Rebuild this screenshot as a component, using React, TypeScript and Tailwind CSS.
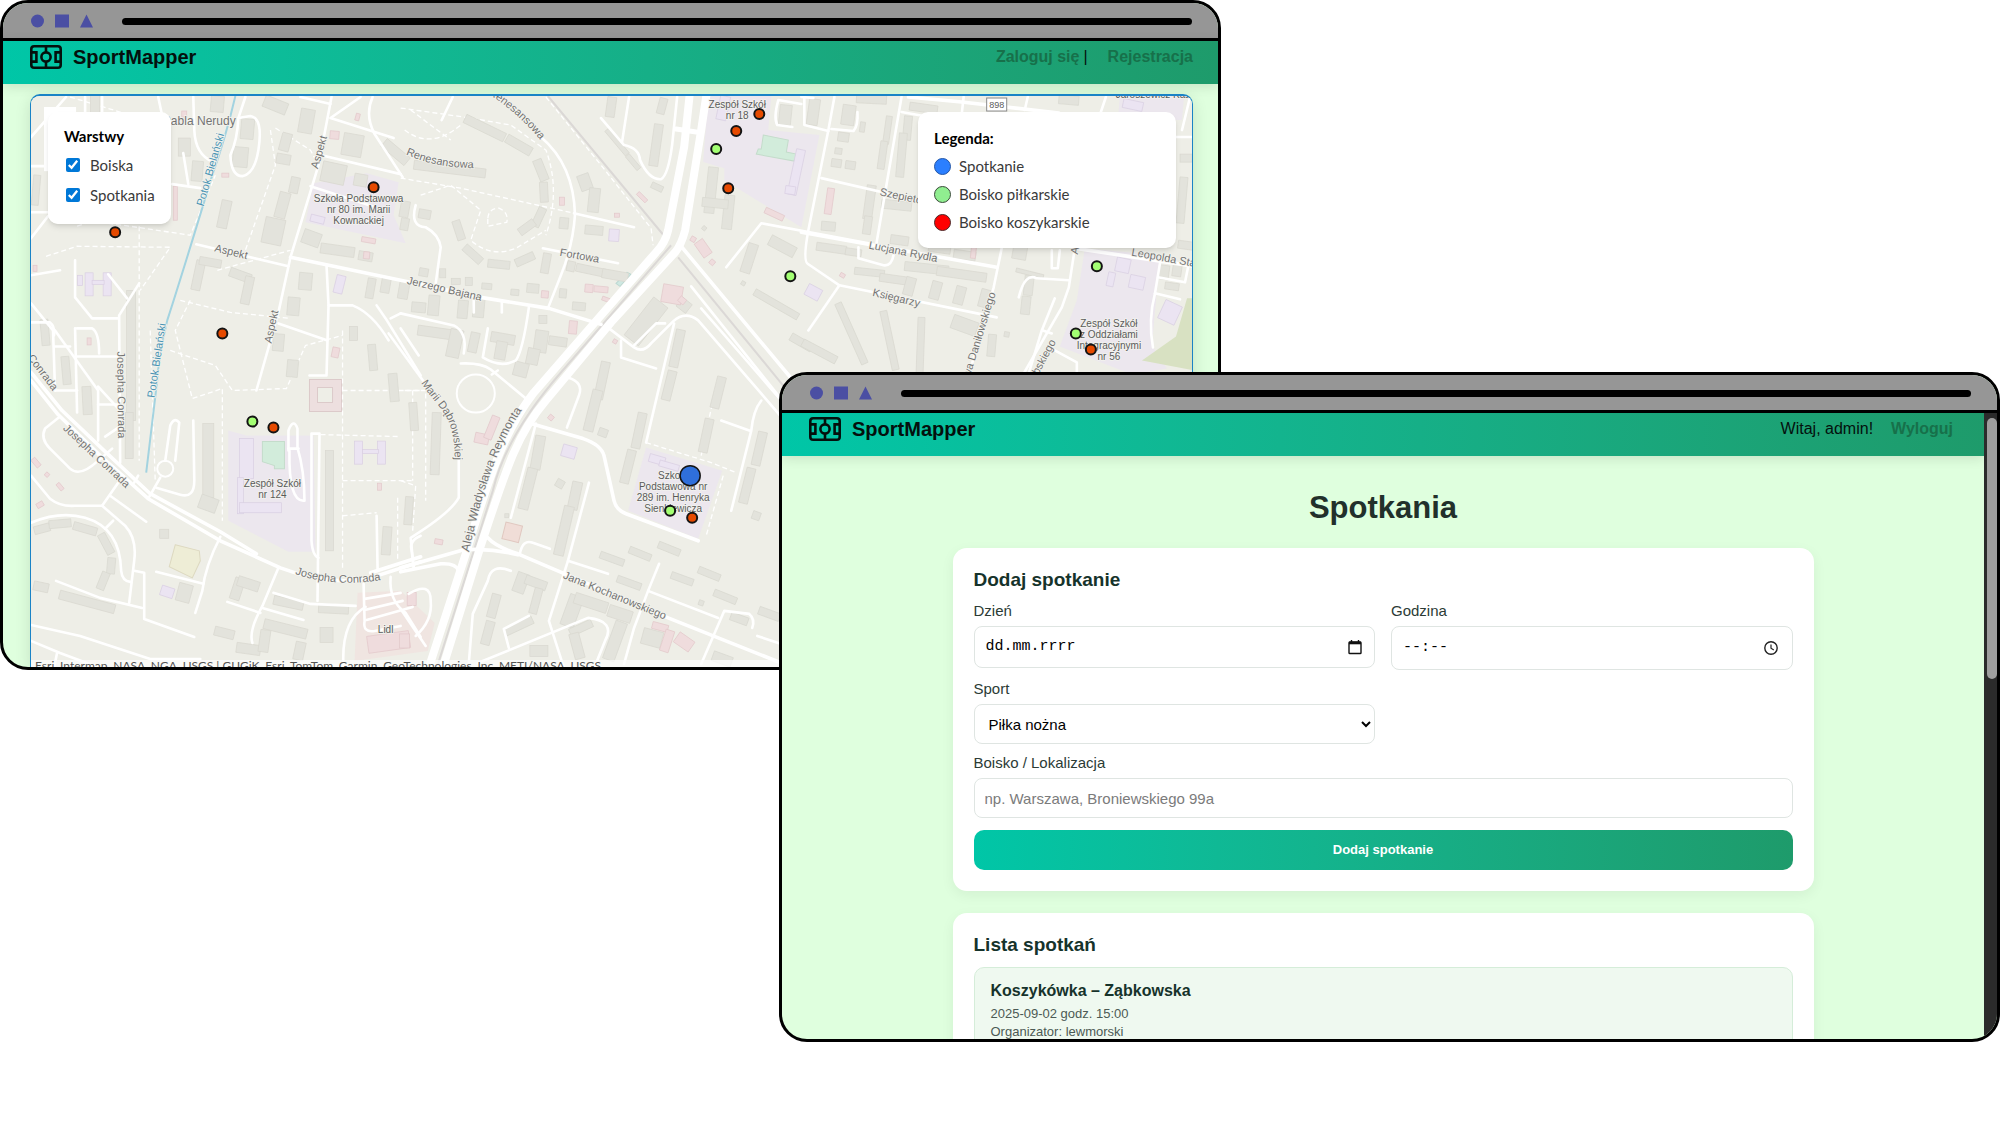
import React, { useState } from 'react';
import clsx from 'clsx';

type Point = [number, number];

// [center x, center y, width, height, rotation]
type Block = [number, number, number, number, number];

const BUILDINGS: Block[] = [
  [95, 103, 9, 20, 0], [217, 104, 13, 16, 5], [275, 105, 24, 12, 22], [306, 121, 14, 24, 10], [247, 129, 13, 20, 5],
  [240, 157, 15, 20, 5], [184, 147, 12, 18, 0], [197, 171, 11, 20, 5], [285, 142, 10, 18, 15], [283, 159, 14, 10, 10],
  [352, 145, 20, 22, 10], [395, 152, 30, 10, 40], [333, 173, 24, 20, 12], [360, 180, 13, 12, 10], [294, 185, 9, 16, 12],
  [224, 214, 10, 28, 12], [282, 205, 11, 26, 15], [273, 231, 20, 26, 12], [198, 275, 9, 30, 12], [210, 262, 22, 8, 10],
  [240, 275, 22, 9, 20], [247, 290, 9, 28, 12], [305, 281, 13, 17, 5], [293, 306, 12, 18, 5], [36, 190, 7, 30, 5],
  [311, 238, 18, 14, 20], [337, 250, 34, 10, 8], [365, 256, 14, 9, 10], [370, 288, 8, 20, 10], [385, 285, 9, 15, 10],
  [403, 290, 10, 17, 10], [404, 209, 9, 16, 10], [404, 224, 8, 12, 10], [45, 332, 8, 26, -5], [66, 370, 8, 28, -5],
  [87, 400, 9, 28, -3], [131, 355, 9, 130, 0], [129, 435, 8, 46, 0], [208, 460, 11, 74, 0], [208, 503, 18, 14, 20],
  [329, 500, 8, 100, 0], [278, 342, 11, 17, 5], [292, 368, 11, 17, 5], [353, 333, 8, 14, 0], [372, 357, 8, 26, -5],
  [393, 387, 9, 28, -5], [413, 416, 8, 28, -4], [408, 510, 8, 28, 4], [386, 540, 9, 28, 4], [435, 443, 9, 62, 2],
  [164, 533, 9, 9, 0], [42, 528, 16, 8, -15], [60, 523, 22, 8, -5], [85, 528, 24, 8, 16],
  [106, 543, 8, 22, -28], [111, 565, 8, 16, 5], [103, 580, 8, 18, 22], [41, 586, 15, 9, 12], [87, 601, 57, 9, 15],
  [184, 592, 14, 18, 15], [237, 588, 10, 22, 18], [248, 583, 22, 10, 18], [288, 602, 30, 9, 12], [333, 608, 30, 9, 3],
  [285, 628, 44, 10, 14], [326, 634, 13, 15, 0], [224, 632, 20, 9, 14], [248, 648, 24, 10, 8], [264, 640, 10, 22, 8],
  [299, 650, 10, 18, 12], [484, 128, 44, 9, 26], [518, 145, 28, 9, 30], [449, 169, 72, 9, 7], [540, 170, 9, 22, -22],
  [543, 192, 8, 20, -3], [458, 230, 8, 20, -18], [472, 254, 22, 8, 42], [498, 264, 22, 8, 6], [524, 259, 20, 8, -24],
  [538, 217, 8, 20, 25], [526, 227, 18, 8, -36], [584, 182, 12, 16, -20], [593, 200, 11, 24, 6], [563, 223, 9, 11, 5],
  [593, 230, 18, 9, 5], [610, 107, 9, 20, 8], [661, 106, 8, 16, 15], [655, 145, 9, 42, 8], [616, 142, 32, 5, 50],
  [632, 162, 18, 5, 50], [656, 187, 12, 6, 25], [424, 214, 12, 9, 10], [423, 272, 9, 8, 10], [442, 273, 6, 9, 0],
  [455, 281, 9, 6, 0], [468, 281, 7, 8, 0], [486, 286, 10, 6, 5], [532, 288, 12, 9, 5], [514, 292, 8, 6, 5],
  [545, 263, 8, 20, 10], [562, 293, 7, 9, 5], [570, 266, 8, 10, 12], [590, 270, 30, 8, 12], [614, 275, 26, 9, 10],
  [578, 306, 13, 8, 5], [557, 341, 18, 9, 8], [542, 319, 8, 8, 0], [433, 305, 11, 20, 5], [418, 307, 14, 10, 5],
  [462, 309, 10, 18, 5], [478, 307, 11, 20, 5], [434, 332, 34, 10, 8], [454, 343, 13, 28, 12], [473, 342, 9, 20, 12],
  [502, 338, 24, 10, 10], [500, 350, 11, 18, 10], [540, 341, 13, 22, 8], [532, 356, 12, 16, 12], [520, 369, 14, 14, 15],
  [645, 321, 18, 48, 38], [683, 305, 12, 11, 38], [676, 348, 9, 38, 12], [668, 385, 9, 30, 14], [601, 380, 9, 38, 12],
  [592, 410, 10, 42, 14], [638, 430, 9, 36, 12], [627, 466, 9, 34, 14], [717, 392, 9, 32, 14], [705, 435, 9, 34, 12],
  [758, 448, 9, 34, 13], [746, 485, 9, 36, 14], [537, 452, 10, 34, 10], [527, 488, 10, 42, 14], [574, 495, 10, 28, 12],
  [563, 530, 10, 50, 13], [559, 483, 8, 8, 30], [602, 432, 9, 8, 20], [755, 515, 8, 8, 20], [506, 515, 4, 4, 0],
  [611, 558, 25, 7, 20], [639, 553, 23, 7, 22], [668, 548, 23, 7, 22], [708, 573, 23, 7, 22], [681, 578, 23, 7, 20],
  [628, 582, 25, 7, 20], [724, 596, 24, 7, 22], [700, 602, 5, 5, 20], [738, 618, 18, 8, 20], [768, 613, 22, 8, 20],
  [520, 582, 12, 20, 20], [535, 582, 22, 9, 20], [535, 600, 8, 26, 15], [493, 605, 9, 24, 15], [487, 632, 9, 24, 15],
  [518, 625, 30, 8, -25], [571, 610, 14, 32, 20], [590, 602, 34, 11, 18], [619, 613, 24, 12, 18], [614, 640, 12, 40, 20],
  [580, 627, 24, 8, -25], [576, 645, 10, 26, -15], [538, 650, 18, 11, 0], [651, 637, 20, 16, 15], [721, 658, 20, 10, 20],
  [710, 190, 10, 46, 6], [727, 212, 10, 34, 6], [714, 203, 26, 9, 6], [703, 228, 4, 4, 40], [748, 258, 10, 30, 18],
  [781, 246, 28, 11, 28], [742, 283, 4, 4, 30], [775, 304, 50, 7, 30], [800, 342, 24, 8, 30], [784, 115, 12, 20, 6],
  [812, 112, 11, 26, 8], [847, 115, 13, 20, 8], [861, 127, 5, 10, 8], [842, 137, 11, 9, 8], [837, 151, 7, 6, 8],
  [835, 163, 10, 8, 8], [849, 165, 10, 8, 8], [870, 99, 30, 9, 3], [886, 130, 6, 28, 8], [881, 155, 7, 28, 8],
  [906, 128, 8, 24, 5], [900, 155, 8, 44, 5], [922, 108, 28, 8, 8], [868, 202, 9, 34, 8], [866, 225, 8, 18, 8],
  [827, 226, 14, 9, 5], [830, 248, 30, 8, 8], [852, 252, 16, 7, 8], [895, 205, 30, 9, 6], [898, 240, 18, 9, 8],
  [938, 248, 22, 9, 8], [963, 255, 22, 9, 8], [868, 272, 30, 7, 6], [893, 279, 30, 8, 8], [925, 268, 44, 9, 6],
  [960, 274, 50, 9, 8], [908, 286, 10, 18, 15], [934, 290, 10, 18, 15], [958, 295, 10, 18, 15], [983, 298, 10, 18, 15],
  [818, 351, 38, 8, 28], [850, 333, 7, 66, -24], [888, 340, 7, 60, -12], [919, 345, 7, 56, 2], [963, 325, 26, 14, 20],
  [1027, 285, 9, 20, 6], [1024, 305, 9, 18, 6], [990, 345, 8, 22, 5], [1005, 334, 5, 5, 10], [1018, 252, 14, 14, 10],
  [1028, 273, 28, 4, 14], [1162, 272, 10, 14, 8], [1175, 270, 9, 12, 8], [1170, 286, 14, 7, 8], [1184, 158, 12, 8, 0],
  [1180, 200, 8, 46, 5], [1184, 245, 16, 8, 8], [1067, 100, 20, 9, 5],
];

const SCHOOLS: Block[] = [
  [89, 284, 8, 23, 0], [107, 284, 8, 23, 0], [98, 282, 12, 4, 0], [80, 280, 5, 10, 0], [339, 284, 9, 18, 14],
  [358, 452, 8, 23, 0], [381, 452, 8, 23, 0], [370, 451, 16, 4, 0], [246, 458, 14, 40, 0], [240, 495, 6, 36, 0],
  [260, 507, 42, 10, 0], [167, 591, 13, 10, 18], [568, 451, 14, 12, 16], [656, 459, 16, 8, 16], [668, 465, 20, 6, 16],
  [812, 292, 15, 12, 28], [795, 172, 9, 46, 12], [789, 190, 10, 8, 8], [722, 108, 10, 24, 12], [317, 219, 14, 7, 14],
  [1121, 265, 14, 14, 12], [1109, 279, 7, 14, 12], [1135, 282, 15, 13, 12], [1168, 312, 18, 20, 25], [1131, 105, 20, 9, 12],
  [613, 235, 10, 12, 4],
];

const SHOPS: Block[] = [
  [184, 114, 5, 6, 0], [334, 135, 9, 8, 5], [357, 117, 4, 7, 15], [225, 175, 7, 4, 0], [175, 203, 4, 34, 0],
  [366, 255, 6, 7, 5], [368, 240, 14, 5, 10], [35, 268, 4, 6, 0], [89, 341, 4, 7, 0], [335, 352, 7, 10, 12],
  [36, 462, 10, 5, 50], [47, 474, 4, 4, 40], [60, 486, 8, 4, 50], [40, 504, 7, 5, -30], [379, 486, 4, 7, 0],
  [411, 598, 9, 13, 0], [388, 641, 42, 17, -8], [561, 201, 5, 8, 0], [616, 215, 5, 4, 0], [641, 197, 12, 4, 45],
  [544, 294, 7, 7, 5], [572, 327, 8, 13, 5], [671, 294, 20, 18, 10], [681, 300, 7, 6, 40], [702, 248, 10, 17, -35],
  [692, 239, 5, 5, 30], [711, 262, 5, 5, 40], [588, 288, 8, 8, 5], [600, 289, 14, 6, 5], [605, 299, 8, 4, 20],
  [481, 438, 14, 10, 12], [491, 427, 8, 24, 22], [550, 417, 5, 5, 40], [614, 341, 4, 4, 30], [438, 541, 8, 5, 10],
  [828, 201, 7, 26, 8], [841, 275, 5, 4, 30], [659, 626, 16, 7, 15], [666, 640, 9, 22, 18], [683, 641, 18, 12, 35],
  [773, 214, 20, 6, 25], [404, 640, 10, 14, 0], [972, 250, 5, 16, 6],
];

const STREETS = [
  'M31 137 L66 97', 'M85 97 V118', 'M102 97 V118', 'M158 97 L162 116', 'M31 166 H50', 'M31 212 H50', 'M31 238 L48 216',
  'M193 97 L194 130 Q195 155 213 162', 'M183 153 L188 184', 'M172 184 L200 188', 'M245 97 L238 118',
  'M238 118 Q237 140 230 155 Q231 176 242 176 Q254 174 258 150 Q263 118 250 116 L238 118', 'M300 97 L330 104',
  'M360 97 L330 118 L393 138', 'M372 97 Q364 115 374 134 L402 177', 'M320 155 L400 174', 'M310 186 L372 206',
  'M331 97 L318 165 L290 257 L278 312 L256 390', 'M196 244 L288 266', 'M31 275 L60 270', 'M75 260 V297 L92 318 H118',
  'M108 274 L127 298', 'M139 283 L119 315 L120 462', 'M31 303 L53 330 L55 390', 'M31 322 H50 Q55 326 54 335',
  'M75 328 L77 412', 'M55 390 H77', 'M55 346 H70', 'M77 328 H92 Q99 332 99 353', 'M77 356 H120', 'M55 330 L98 390 V440',
  'M98 404 L117 404', 'M98 386 L120 410', 'M105 436 L121 425', 'M326 265 L328 305 L326 375 H309', 'M278 323 L327 340',
  'M328 305 H352 Q372 313 388 340', 'M376 305 L385 318 L420 375', 'M390 318 L400 313', 'M60 416 L45 428 Q40 438 50 448 L70 468 Q80 477 98 460 L112 448',
  'M31 475 L50 498 Q60 506 75 505 H102 L118 482', 'M31 522 Q60 510 85 517 Q120 527 121 570 Q122 580 130 581',
  'M102 505 L125 525 Q137 538 134 560 L129 602', 'M134 570 L144 572 V618 L194 636', 'M105 528 L113 520', 'M110 495 L146 521',
  'M56 580 L100 597 L142 607', 'M165 460 L170 425 Q174 416 179 422 L175 460', 'M160 477 L148 498', 'M193 420 L194 480 Q194 498 180 494 L156 487',
  'M138 475 L134 482', 'M220 536 Q205 565 202 590 L195 612', 'M156 571 L203 583', 'M278 567 L262 605 Q248 630 252 642',
  'M227 601 L260 612', 'M262 607 L303 619', 'M273 592 L310 603 L355 605', 'M317 600 L319 433 H311 L311 540 Q312 555 318 557',
  'M288 450 V430 Q293 417 297 428 V447 Q304 470 304 500 Q288 502 289 450', 'M288 448 H298', 'M376 515 L377 570', 'M420 535 Q408 540 411 550 L413 566',
  'M31 624 L80 635 L150 658 H200', 'M31 640 L60 652 L100 667', 'M57 652 L54 667', 'M343 667 Q340 620 365 606',
  'M363 583 L364 620 Q362 632 374 630 L400 625', 'M364 598 L400 592', 'M364 609 L402 600', 'M366 619 L412 606', 'M390 576 Q388 600 405 612 L420 636',
  'M408 593 Q430 580 430 600 Q432 620 415 635', 'M400 608 L425 645', 'M441 120 L452 97', 'M540 137 Q573 165 574 215 Q572 245 560 275 L547 308',
  'M573 213 L633 227', 'M542 248 L617 263', 'M628 97 L621 142', 'M600 118 L623 145 Q638 148 639 160 Q648 180 660 179 Q667 175 671 145 L676 97',
  'M415 205 Q409 226 425 227 Q438 234 440 247 L435 283', 'M400 313 L453 325 Q467 332 463 353', 'M400 328 L418 355', 'M388 333 L423 381',
  'M487 328 L482 357 Q500 368 515 360 Q522 350 528 307', 'M460 363 Q480 362 490 369 L525 398', 'M491 374 L497 370', 'M473 300 V312', 'M501 301 V312',
  'M608 328 L633 347 Q642 353 650 343 L672 321 Q684 310 697 320 L778 414', 'M633 345 L655 323 H664', 'M673 323 L645 442 M620 340 V357 L655 368',
  'M567 377 Q583 382 578 395 L566 427', 'M700 308 L780 400', 'M690 286 L785 405', 'M535 423 L510 517', 'M588 482 L567 560 L548 620 L563 667',
  'M567 560 L607 573', 'M519 553 Q522 538 532 542 L549 548', 'M658 563 L647 590 L633 627 L623 663', 'M647 590 L717 617', 'M700 663 L723 610 L748 613 Q754 618 751 627',
  'M760 400 Q752 410 750 430 L730 510', 'M720 420 L748 430', 'M510 570 Q490 562 487 580 L472 613 L468 663', 'M477 662 L587 617 Q615 620 604 640 L594 665',
  'M528 615 L503 628 L508 647', 'M458 457 V497 Q450 512 410 537 L413 567', 'M756 635 L780 643', 'M833 97 L827 130 L807 230 Q801 262 807 264 L838 285 L807 330',
  'M725 267 L760 223 L867 243', 'M791 127 L776 125 Q772 118 777 100 L800 104', 'M803 97 V125 L827 131', 'M830 129 L852 131 Q857 125 856 112', 'M820 178 L920 201',
  'M900 97 L875 243', 'M900 112 L922 116', 'M962 97 L960 115', 'M1026 97 L1023 110', 'M1104 97 L1098 115', 'M857 247 V258 L882 265 Q890 266 892 255',
  'M838 285 L995 317', 'M1000 248 L992 287 L967 375', 'M1073 248 L1067 287 L1060 307 L1022 373', 'M1053 298 L1040 330 L1027 373', 'M1041 330 L1050 333',
  'M1017 297 Q1023 272 1035 278 L1067 280', 'M1050 250 V268 H1056 L1058 250', 'M1158 263 L1153 293 Q1146 320 1151 347', 'M1156 277 L1183 282 L1187 262', 'M1153 293 L1178 299',
  'M1053 350 L1075 362 V373', 'M1188 97 L1180 130', 'M1170 137 H1193', 'M800 97 L812 98',
];

const MAIN_STREETS = [
  'M290 257 L400 280 L480 297 L548 308 L600 324', 'M680 246 L800 390', 'M800 232 L995 267', 'M907 97 L960 102 L1057 113', 'M1073 248 L1193 266',
  'M530 423 L582 438 Q600 444 603 455 L613 500 Q615 509 625 513 L697 540', 'M487 537 Q495 546 517 553 L667 617 L780 662',
  'M400 567 L463 549 Q490 547 517 554', 'M400 571 L440 563 Q455 562 458 570', 'M31 372 L62 410 L104 450 L150 493 L220 531 L256 553',
  'M31 380 L58 414 L100 455 L148 498 L220 540 L280 567 Q330 586 370 577 L420 561', 'M370 572 L420 556',
];

const FOOTPATHS = [
  'M77 226 L92 221 L130 226 L190 235 L215 175', 'M46 256 L77 246 L170 247 L140 290', 'M139 226 V460', 'M150 330 L155 480', 'M190 300 L175 330 L192 398 L222 388 V520',
  'M170 350 L215 365 L232 390 L286 388 L305 345 L342 335', 'M180 300 L230 312 L290 318', 'M270 130 L275 165 L245 250', 'M217 270 L290 250', 'M342 330 V570',
  'M342 390 H420', 'M342 480 H412', 'M397 497 V560', 'M342 515 L376 512', 'M320 434 L400 436', 'M412 390 V480', 'M400 108 L470 118 L510 125 L545 150 Q560 190 545 235',
  'M400 178 L460 188 L573 213', 'M420 195 L450 185 L480 210 L470 240 Q490 258 515 248 L545 230', 'M487 218 Q488 208 498 208 Q508 212 506 222 L487 226 Z', 'M545 97 L600 165 L650 228 L652 245',
  'M404 130 Q430 150 460 125 M410 110 L450 140', 'M645 442 L710 462 L735 472', 'M722 475 L705 535', 'M716 380 L700 455', 'M404 390 H425 V500', 'M400 480 L415 485 L412 530',
  'M70 97 L130 115 M275 128 L310 150 L318 165',
];

// Road names run along their own path
const ROAD_LABELS: { id: string; d: string; name: string; color: string; size: number }[] = [
  { id: 'nerudy', d: 'M159 125 L239 125', name: 'Pabla Nerudy', color: '#737373', size: 12 },
  { id: 'aspekt1', d: 'M316 174 L328 132', name: 'Aspekt', color: '#737373', size: 11 },
  { id: 'aspekt2', d: 'M210 250 L250 260', name: 'Aspekt', color: '#737373', size: 11 },
  { id: 'aspekt3', d: 'M270 348 L279 306', name: 'Aspekt', color: '#737373', size: 11 },
  { id: 'potok1', d: 'M203 207 L224 134', name: 'Potok Bielański', color: '#4a94b4', size: 11 },
  { id: 'potok2', d: 'M154 400 L166 321', name: 'Potok Bielański', color: '#4a94b4', size: 11 },
  { id: 'ren1', d: 'M484 92 Q515 110 542 143', name: 'Renesansowa', color: '#737373', size: 11 },
  { id: 'ren2', d: 'M404 154 Q435 168 474 168', name: 'Renesansowa', color: '#737373', size: 11 },
  { id: 'fortowa', d: 'M556 255 L600 263', name: 'Fortowa', color: '#737373', size: 11 },
  { id: 'bajana', d: 'M404 283 L482 301', name: 'Jerzego Bajana', color: '#737373', size: 11 },
  { id: 'marii', d: 'M420 382 C438 410 454 412 454 460', name: 'Marii Dąbrowskiej', color: '#737373', size: 11 },
  { id: 'reymonta', d: 'M468 553 C477 510 490 455 522 408', name: 'Aleja Władysława Reymonta', color: '#737373', size: 12 },
  { id: 'conrada1', d: 'M24 353 L56 395', name: 'Conrada', color: '#737373', size: 11 },
  { id: 'conrada2', d: 'M117 351 L118 438', name: 'Josepha Conrada', color: '#737373', size: 11 },
  { id: 'conrada3', d: 'M62 428 L126 488', name: 'Josepha Conrada', color: '#737373', size: 11 },
  { id: 'conrada4', d: 'M294 573 Q335 587 381 579', name: 'Josepha Conrada', color: '#737373', size: 11 },
  { id: 'jana', d: 'M561 577 L664 619', name: 'Jana Kochanowskiego', color: '#737373', size: 11 },
  { id: 'szep', d: 'M877 195 L945 209', name: 'Szepietowska', color: '#737373', size: 11 },
  { id: 'rydla', d: 'M866 248 L936 262', name: 'Lucjana Rydla', color: '#737373', size: 11 },
  { id: 'ksieg', d: 'M869 295 L919 307', name: 'Księgarzy', color: '#737373', size: 11 },
  { id: 'danil', d: 'M954 423 L995 290', name: 'Władysława Daniłowskiego', color: '#737373', size: 11 },
  { id: 'skiego', d: 'M1025 396 L1053 344', name: 'Jarzębskiego', color: '#737373', size: 11 },
  { id: 'a', d: 'M1074 266 L1084 210', name: 'Aspekt', color: '#737373', size: 11 },
  { id: 'leopolda', d: 'M1128 255 L1206 269', name: 'Leopolda Staffa', color: '#737373', size: 11 },
];

const PLACE_LABELS: { x: number; y: number; lines: string[] }[] = [
  { x: 358, y: 202, lines: ['Szkoła Podstawowa', 'nr 80 im. Marii', 'Kownackiej'] },
  { x: 736, y: 108, lines: ['Zespół Szkół', 'nr 18'] },
  { x: 1107, y: 327, lines: ['Zespół Szkół', 'z Oddziałami', 'Integracyjnymi', 'nr 56'] },
  { x: 272, y: 486, lines: ['Zespół Szkół', 'nr 124'] },
  { x: 672, y: 478, lines: ['Szkoła', 'Podstawowa nr', '289 im. Henryka', 'Sienkiewicza'] },
  { x: 385, y: 632, lines: ['Lidl'] },
  { x: 1151, y: 98, lines: ['Jaroszewicz Kas'] },
];

const BASKETBALL: Point[] = [
  [115, 232], [373, 187], [222, 333], [273, 427], [758, 114], [735, 131], [727, 188], [691, 517], [1089, 349],
];

const FOOTBALL: Point[] = [[252, 421], [715, 149], [789, 276], [669, 510], [1095, 266], [1074, 333]];

const Blocks: React.FC<{ items: Block[]; fill: string; stroke: string }> = ({ items, fill, stroke }) => (
  <g fill={fill} stroke={stroke} strokeWidth="0.7">
    {items.map(([x, y, w, h, r], i) => (
      <rect key={i} x={x - w / 2} y={y - h / 2} width={w} height={h} transform={`rotate(${r} ${x} ${y})`} />
    ))}
  </g>
);

const CityMap: React.FC = () => (
  <svg
    viewBox="31 96 1162 570"
    preserveAspectRatio="xMinYMin slice"
    className="block h-full w-full font-['Liberation_Sans',sans-serif]"
    role="img"
    aria-label="Mapa"
  >
    <rect x="31" y="96" width="1162" height="572" fill="#eeeee7" />

    <g fill="#ece7ee">
      <path d="M366 173 L398 182 L393 215 L405 243 L305 222 L313 183 Z" />
      <path d="M228 430 L246 435 H313 L315 551 H288 L228 520 Z" />
      <path d="M645 447 L721 470 L697 538 L627 510 Z" />
      <path d="M707 96 H770 L767 130 L818 135 L800 227 L723 180 V168 L702 162 Z" />
      <path d="M1083 248 L1158 255 L1150 345 L1165 368 L1130 374 L1058 346 L1075 300 Z" />
      <path d="M1118 96 H1182 L1180 120 H1116 Z" />
    </g>
    <path d="M357 592 L400 590 L434 622 L427 650 L354 660 Z" fill="#f0e5e1" />
    <path d="M1140 360 L1174 336 L1185 298 H1193 V370 Z" fill="#d8e1c2" />
    <path d="M175 544 L199 550 L200 560 L192 577 L169 566 Z" fill="#eeedd6" stroke="#ddd9c0" />
    <path d="M262 441 H284 V468 H274 V465 L262 461 Z" fill="#d2ecdb" stroke="#c4dccb" />
    <path d="M762 135 L787 140 L785 152 L795 154 L793 161 L755 154 L757 149 L760 149 Z" fill="#d2ecdb" stroke="#c4dccb" />
    <path d="M615 283 L626 272 L630 274 L619 286 Z" fill="#cfe8e2" stroke="#bcd8d2" />
    <rect x="503" y="523" width="17" height="17" fill="#f0ddd7" stroke="#e0c8c0" transform="rotate(14 511 531)" />
    <path d="M309 379 H341 V411 H309 Z M317 387 V402 H332 V387 Z" fill="#eddfdf" stroke="#dccaca" fillRule="evenodd" />

    <g fill="none" stroke="#ffffff" strokeWidth="1.3" strokeDasharray="5 3">
      {FOOTPATHS.map((d) => <path key={d} d={d} />)}
    </g>
    <Blocks items={BUILDINGS} fill="#e3e3dc" stroke="#d9d8d0" />
    <Blocks items={SCHOOLS} fill="#ebe4f2" stroke="#d9cfe2" />
    <Blocks items={SHOPS} fill="#efdcdd" stroke="#e2c8ca" />

    <path d="M235 96 Q226 135 212 175 Q180 280 167 320 Q158 360 157 380 L146 472" fill="none" stroke="#a3d3e0" strokeWidth="2" />
    <g fill="none" stroke="#dbd8d6" strokeWidth="2">
      <path d="M547 96 L665 238 M677 257 L790 395" />
      <path d="M670 245 L560 372 Q505 435 492 490 L436 667" />
    </g>
    <g fill="none" stroke="#ffffff" strokeLinecap="round" strokeLinejoin="round">
      <g strokeWidth="2.6">{STREETS.map((d) => <path key={d} d={d} />)}</g>
      <g strokeWidth="3.6">{MAIN_STREETS.map((d) => <path key={d} d={d} />)}</g>
      <circle cx="475" cy="393" r="19" strokeWidth="2" />
      <circle cx="165" cy="468" r="8" strokeWidth="2" />
      <path d="M675 129 L695 132" strokeWidth="5" />
      <g strokeWidth="8">
        <path d="M689 90 L683 147 L667 230 Q664 243 655 252 L600 315 L533 392 C505 428 490 470 466 550 L427 670" />
        <path d="M706 90 L700 130 L684 230 Q680 245 674 252 L610 322 L545 400 C515 435 505 470 480 545 L441 670" />
      </g>
    </g>

    <rect x="44" y="107" width="32" height="64" fill="#ffffff" />
    <rect x="985" y="98" width="20" height="13" fill="#ffffff" stroke="#8a8a8a" />
    <text x="995" y="108" fontSize="9" textAnchor="middle" fill="#5c5c5c">898</text>

    <g stroke="#f3f3ee" strokeWidth="1.5" paintOrder="stroke" textAnchor="middle">
      {ROAD_LABELS.map(({ id, d, name, color, size }) => (
        <React.Fragment key={id}>
          <path id={`road-${id}`} d={d} fill="none" stroke="none" />
          <text fontSize={size} fill={color}>
            <textPath href={`#road-${id}`} startOffset="50%">{name}</textPath>
          </text>
        </React.Fragment>
      ))}
      {PLACE_LABELS.map(({ x, y, lines }) => (
        <text key={lines.join(' ')} fontSize="10" fill="#5a5a5a">
          {lines.map((line, i) => <tspan key={line} x={x} y={y + i * 11}>{line}</tspan>)}
        </text>
      ))}
    </g>

    <g stroke="#141414" strokeWidth="2">
      {BASKETBALL.map(([x, y]) => <circle key={`${x}-${y}`} cx={x} cy={y} r="5" fill="#e64a00" />)}
      {FOOTBALL.map(([x, y]) => <circle key={`${x}-${y}`} cx={x} cy={y} r="5" fill="#a3ff73" />)}
      <circle cx="689" cy="475" r="10" fill="#2f6fdb" strokeWidth="1.5" />
    </g>
  </svg>
);

const Logo: React.FC = () => (
  <svg viewBox="0 0 32 24" className="h-6 w-8" fill="none" stroke="#04100d" strokeWidth="2.6">
    <rect x="1.3" y="1.3" width="29.4" height="21.4" rx="2.8" />
    <path d="M16 1.2 V7.4 M16 16.6 V22.8" />
    <circle cx="16" cy="12" r="4.6" />
    <path d="M1.2 7.4 H6.4 V16.6 H1.2 M30.8 7.4 H25.6 V16.6 H30.8" />
  </svg>
);

const BrowserWindow: React.FC<{ className?: string; children: React.ReactNode }> = ({ className, children }) => (
  <section
    className={clsx(
      'relative flex aspect-[1221/670] w-[61.05%] flex-col overflow-hidden rounded-[28px] border-[3px] border-black bg-[#dfffde]',
      className
    )}
  >
    <div className="flex h-[38px] shrink-0 items-center border-b-[3px] border-black bg-[#969696] pt-px pr-[26px] pl-7">
      <svg viewBox="0 0 62 14" className="h-3.5 w-[62px]" fill="#4b4fa3">
        <circle cx="6.5" cy="7" r="6.5" />
        <rect x="24" y="0.5" width="14" height="13" />
        <path d="M49 13.5 L55.5 0.5 L62 13.5 Z" />
      </svg>
      <div className="ml-[29px] h-[7px] flex-1 rounded-full bg-black" />
    </div>
    {children}
  </section>
);

const Header: React.FC<{ className: string; children: React.ReactNode }> = ({ className, children }) => (
  <header
    className={clsx(
      'relative flex h-[43px] shrink-0 items-center justify-between bg-linear-to-r from-[#00c6a7] to-[#1e9b6b] pb-3 pl-[27px] shadow-[0_2px_12px_rgba(0,0,0,0.12)]',
      className
    )}
  >
    <a href="#" className="flex items-center gap-[11px] text-xl font-bold text-[#04100d]">
      <Logo />
      SportMapper
    </a>
    <nav className="flex items-center text-base text-[#04100d]">{children}</nav>
  </header>
);

const LEGEND = [
  { label: 'Spotkanie', color: 'bg-[#2b7fff] border-[#2457a8]' },
  { label: 'Boisko piłkarskie', color: 'bg-[#90ee90] border-[#3a4a3a]' },
  { label: 'Boisko koszykarskie', color: 'bg-[#ff0000] border-[#4a2a2a]' },
];

const MapPage: React.FC = () => {
  const [layers, setLayers] = useState({ Boiska: true, Spotkania: true });

  return (
    <BrowserWindow>
      <Header className="pr-[25px]">
        <a href="#" className="font-bold text-[#17704a]">Zaloguj się</a>
        <span className="ml-1">|</span>
        <a href="#" className="ml-5 font-bold text-[#17704a]">Rejestracja</a>
      </Header>
      <main className="flex min-h-0 flex-1 pt-2.5 pr-[25px] pl-[27px]">
        <div className="relative min-w-0 flex-1 overflow-hidden rounded-t-[10px] border-x border-t-2 border-[#1a83c6] font-[Lato,sans-serif] shadow-[0_4px_16px_rgba(0,0,0,0.12)]">
          <CityMap />

          <fieldset className="absolute top-4 left-[17px] rounded-[10px] bg-white px-4 pt-3.5 pb-3.5 text-[15px] text-[#3a3a3a] shadow-md">
            <h2 className="mb-1 leading-5 font-bold text-black">Warstwy</h2>
            {(Object.keys(layers) as (keyof typeof layers)[]).map((name) => (
              <label key={name} className="flex h-[30px] items-center gap-2.5 pl-0.5">
                <input
                  type="checkbox"
                  checked={layers[name]}
                  onChange={(e) => setLayers({ ...layers, [name]: e.target.checked })}
                  className="size-3.5 accent-[#0078d7]"
                />
                {name}
              </label>
            ))}
          </fieldset>

          <div className="absolute top-4 right-4 w-[258px] rounded-[10px] bg-white p-4 pb-3 text-[15px] text-[#3a3a3a] shadow-md">
            <h2 className="mb-1 leading-5 font-bold text-black">Legenda:</h2>
            <ul>
              {LEGEND.map(({ label, color }) => (
                <li key={label} className="flex h-7 items-center gap-2">
                  <span className={clsx('size-[17px] rounded-full border', color)} />
                  {label}
                </li>
              ))}
            </ul>
          </div>

          <div className="absolute inset-x-0 bottom-0 h-[7px] overflow-hidden bg-white/70 pl-1 text-xs leading-3 whitespace-nowrap text-[#555]">
            Esri, Intermap, NASA, NGA, USGS | GUGiK, Esri, TomTom, Garmin, GeoTechnologies, Inc, METI/NASA, USGS
          </div>
        </div>
      </main>
    </BrowserWindow>
  );
};

const CARD = 'flex flex-col gap-2.5 rounded-[14px] bg-white p-[21px] pt-5 shadow-[0_4px_14px_rgba(0,0,0,0.06)]';
const FIELD = 'w-full rounded-lg border border-[#dfe5e2] bg-white text-[15px] text-black';
const LABEL = 'mb-1.5 block text-[15px] leading-[18px] text-[#2b3b35]';

const MeetingsPage: React.FC = () => {
  const [sport, setSport] = useState('Piłka nożna');

  return (
    <BrowserWindow className="-mt-[14.9%] ml-auto">
      <div className="flex min-h-0 flex-1">
        <div className="flex min-w-0 flex-1 flex-col overflow-hidden">
          <Header className="pr-[31px]">
            <span>Witaj, admin!</span>
            <a href="#" className="ml-[18px] font-bold text-[#17704a]">Wyloguj</a>
          </Header>
          <main className="mx-auto flex w-full max-w-[861px] flex-col pt-8">
            <h1 className="mb-5 text-center text-[31px] leading-10 font-bold text-[#22302b]">Spotkania</h1>

            <form className={CARD} onSubmit={(e) => e.preventDefault()}>
              <h2 className="text-[19px] leading-6 font-bold text-[#16332b]">Dodaj spotkanie</h2>
              <div className="grid grid-cols-2 items-start gap-x-4 gap-y-2.5">
                <div>
                  <label htmlFor="day" className={LABEL}>Dzień</label>
                  <div className={clsx(FIELD, 'flex h-[42px] items-center pr-3 pl-[11px]')}>
                    <input
                      id="day"
                      type="text"
                      placeholder="dd.mm.rrrr"
                      className="min-w-0 flex-1 font-['Liberation_Mono',monospace] outline-none placeholder:text-black"
                    />
                    <svg viewBox="0 0 14 16" className="h-4 w-3.5" fill="none" stroke="#111" strokeWidth="1.4">
                      <rect x="1" y="3" width="12" height="11.5" rx="0.8" />
                      <path d="M1 4 H13" strokeWidth="2.6" />
                      <path d="M3.5 1 V3 M10.5 1 V3" />
                    </svg>
                  </div>
                </div>
                <div>
                  <label htmlFor="hour" className={LABEL}>Godzina</label>
                  <div className={clsx(FIELD, 'flex h-11 items-center pr-3.5 pl-[11px]')}>
                    <input
                      id="hour"
                      type="text"
                      placeholder="--:--"
                      className="min-w-0 flex-1 font-['Liberation_Mono',monospace] outline-none placeholder:text-black"
                    />
                    <svg viewBox="0 0 14 14" className="size-3.5" fill="none" stroke="#222" strokeWidth="1.4">
                      <circle cx="7" cy="7" r="6.2" />
                      <path d="M7 3.4 V7.2 L9.8 9" strokeWidth="1.2" />
                    </svg>
                  </div>
                </div>
                <div>
                  <label htmlFor="sport" className={LABEL}>Sport</label>
                  <select
                    id="sport"
                    value={sport}
                    onChange={(e) => setSport(e.target.value)}
                    className={clsx(FIELD, 'h-10 pl-2.5')}
                  >
                    <option>Piłka nożna</option>
                    <option>Koszykówka</option>
                  </select>
                </div>
              </div>
              <div>
                <label htmlFor="place" className={LABEL}>Boisko / Lokalizacja</label>
                <input
                  id="place"
                  type="text"
                  placeholder="np. Warszawa, Broniewskiego 99a"
                  className={clsx(FIELD, 'block h-10 px-2.5 placeholder:text-[#7b7b7b]')}
                />
              </div>
              <button
                type="submit"
                className="mt-0.5 h-10 rounded-[10px] bg-linear-to-r from-[#00c6a7] to-[#1e9b6b] text-[13px] font-bold text-white"
              >
                Dodaj spotkanie
              </button>
            </form>

            <section className={clsx(CARD, 'mt-[22px]')}>
              <h2 className="text-[19px] leading-6 font-bold text-[#16332b]">Lista spotkań</h2>
              <article className="rounded-[10px] border border-[#d5edd9] bg-[#eff9f0] px-4 py-3 text-[13px] leading-[18px] text-[#4c5a54]">
                <h3 className="mb-[3px] text-base leading-[22px] font-bold text-[#16332b]">Koszykówka – Ząbkowska</h3>
                <p>2025-09-02 godz. 15:00</p>
                <p>Organizator: lewmorski</p>
              </article>
            </section>
          </main>
        </div>
        <div className="w-[13px] shrink-0 bg-[#2b2b2b] pt-[5px] pl-[3px]">
          <div className="h-[42%] rounded-full bg-[#9e9e9e]" />
        </div>
      </div>
    </BrowserWindow>
  );
};

export default function App() {
  return (
    <div className="overflow-x-hidden bg-white font-['Liberation_Sans',Arial,sans-serif]">
      <MapPage />
      <MeetingsPage />
    </div>
  );
}
